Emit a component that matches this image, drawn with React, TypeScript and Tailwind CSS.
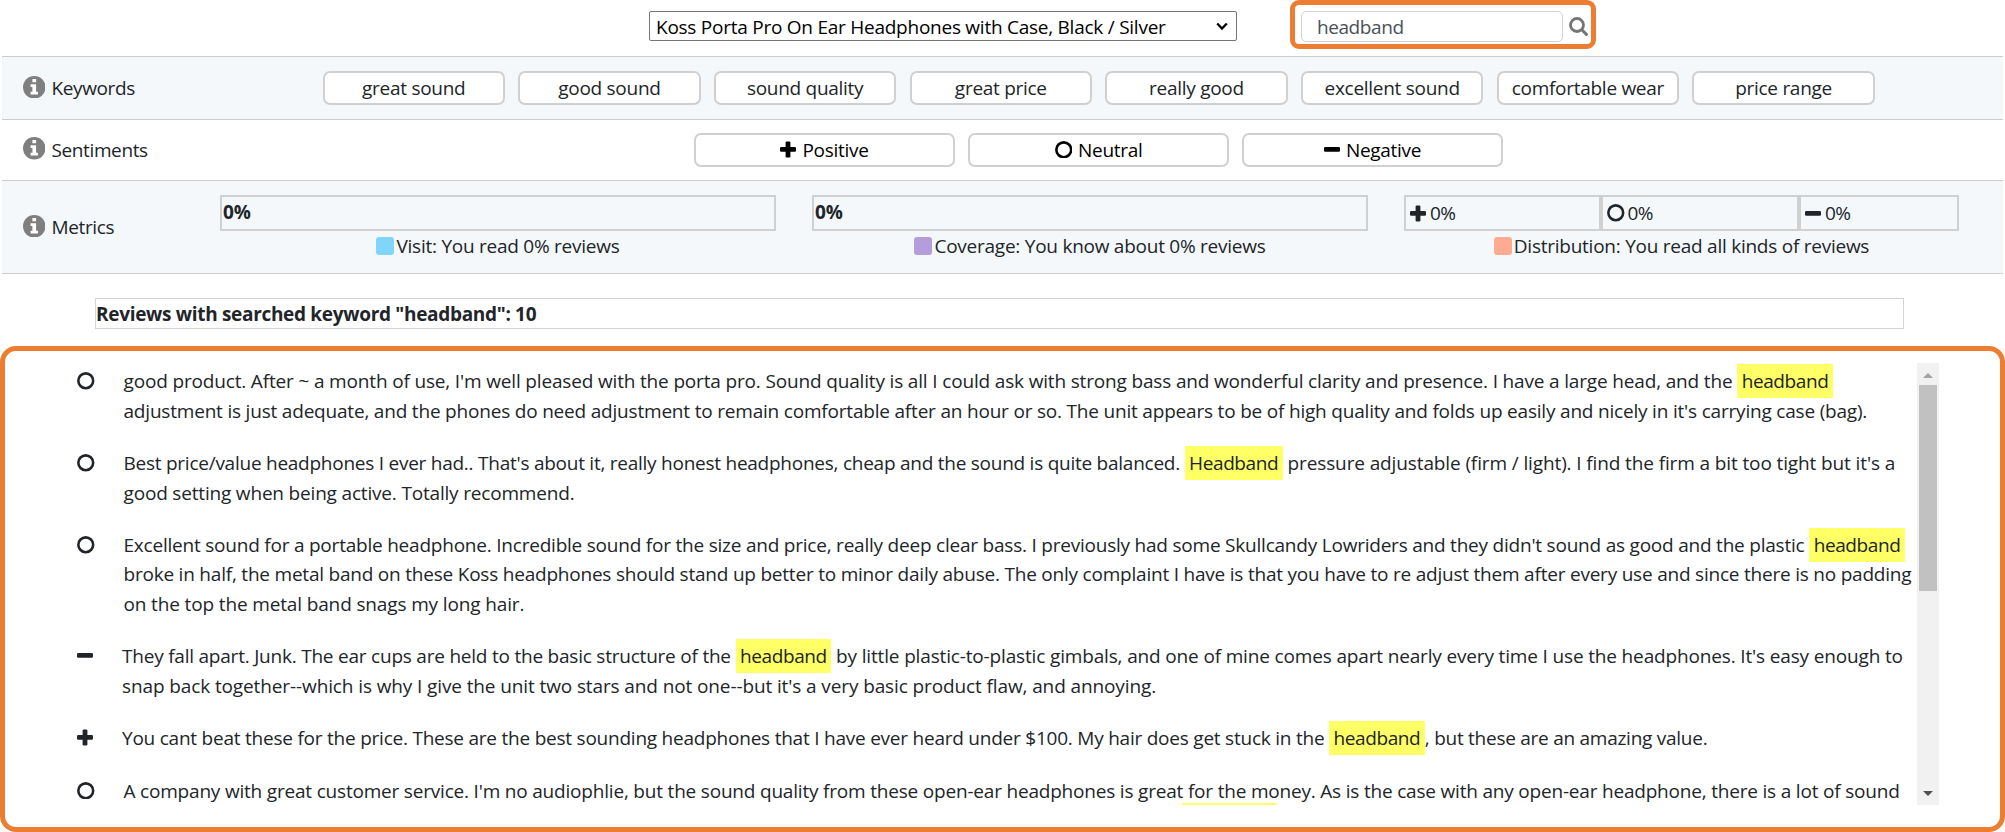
import type { ReactNode } from "react";

type Kind = "positive" | "neutral" | "negative";

function SentimentIcon({ kind }: { kind: Kind }) {
  if (kind === "neutral") {
    return (
      <svg className="block h-[17.5px] w-[17.5px] shrink-0" viewBox="0 0 17 17">
        <circle cx="8.5" cy="8.5" r="7.2" fill="none" stroke="currentColor" strokeWidth="2.5" />
      </svg>
    );
  }
  return (
    <svg className="block h-[17px] w-4 shrink-0" viewBox="0 0 16 17" fill="currentColor">
      <rect x="0" y="6" width="16" height="4.8" rx="1.2" />
      {kind === "positive" && <rect x="5.6" y="0.4" width="4.8" height="16" rx="1.2" />}
    </svg>
  );
}

function InfoIcon() {
  return (
    <svg className="-mt-[2px] block h-[22.5px] w-[22.5px] shrink-0" viewBox="0 0 22 22">
      <circle cx="11" cy="11" r="11" fill="#7f7f7f" />
      <path
        fill="#fff"
        d="M9.2 3h3.6v3.2H9.2zM7.4 8.1h5.4v7.3h1.8V18H7.4v-2.6h1.8v-4.7H7.4z"
      />
    </svg>
  );
}

function RowLabel({ children }: { children: ReactNode }) {
  return (
    <div className="flex w-[180px] shrink-0 items-center gap-[6.5px] pl-[20.5px]">
      <InfoIcon />
      <span className="leading-[30px] tracking-[-0.38px]">{children}</span>
    </div>
  );
}

const keywords = [
  "great sound",
  "good sound",
  "sound quality",
  "great price",
  "really good",
  "excellent sound",
  "comfortable wear",
  "price range",
];

const sentiments: { kind: Kind; label: string }[] = [
  { kind: "positive", label: "Positive" },
  { kind: "neutral", label: "Neutral" },
  { kind: "negative", label: "Negative" },
];

function Legend({ swatch, children }: { swatch: string; children: ReactNode }) {
  return (
    <div className="flex h-[30px] items-center justify-center gap-[2px]">
      <span className={`h-[18px] w-[18px] rounded-[3px] ${swatch}`} />
      <span className="leading-[30px] tracking-[-0.25px]">{children}</span>
    </div>
  );
}

function Mark({ children }: { children: ReactNode }) {
  return <mark className="bg-[#ffff66] px-[4.5px] py-1 tracking-[-0.4px] text-[#212529]">{children}</mark>;
}

function Review({ kind, children }: { kind: Kind; children: ReactNode }) {
  return (
    <div className="flex gap-[29px] whitespace-nowrap leading-[29.25px]">
      <div className="-mt-px flex h-[29.25px] items-center">
        <SentimentIcon kind={kind} />
      </div>
      <div>{children}</div>
    </div>
  );
}

export default function App() {
  return (
    <div className="flex h-[832px] w-[2005px] flex-col overflow-hidden bg-white font-['Open_Sans','Noto_Sans',sans-serif] text-[19px] text-[#212529]">
      <header className="flex h-14 shrink-0 items-start pl-[649px]">
        <div className="mt-[11px] flex h-[30px] w-[588px] items-center justify-between rounded-[2px] border-[1.5px] border-[#767676] pr-2 pl-[6px] text-black">
          <span className="pt-px leading-[28px] tracking-[-0.25px]">Koss Porta Pro On Ear Headphones with Case, Black / Silver</span>
          <svg className="h-[9px] w-[12px]" viewBox="0 0 12 9" fill="none">
            <path d="M1.2 1.5 6 6.6l4.8-5.1" stroke="#000" strokeWidth="2.3" />
          </svg>
        </div>
        <div className="ml-[53px] flex h-[49px] w-[306px] items-center rounded-[9px] border-[5px] border-[#ed7d31] pl-[6px]">
          <div className="mt-[4px] h-[31px] w-[262px] rounded-[5px] border border-[#ced4da] pl-[15px] leading-[30px] tracking-[-0.42px] text-[#495057]">
            headband
          </div>
          <svg className="mt-1 ml-[6px] h-[19px] w-[19px]" viewBox="0 0 19 19" fill="none">
            <circle cx="8" cy="8" r="6.5" stroke="#757575" strokeWidth="2.8" />
            <path d="m12.8 12.8 4.6 4.6" stroke="#757575" strokeWidth="3" strokeLinecap="round" />
          </svg>
        </div>
      </header>

      <section className="mx-[2px] flex h-[63px] shrink-0 items-center border-t border-[#ccc] bg-[#f4f8fb]">
        <RowLabel>Keywords</RowLabel>
        <div className="ml-[140.5px] flex gap-[13.2px]">
          {keywords.map((k) => (
            <button
              key={k}
              className="h-[34px] w-[182.5px] rounded-[7px] border-2 border-[#d0d0d0] bg-white text-center leading-[30px] tracking-[-0.28px] whitespace-nowrap"
            >
              {k}
            </button>
          ))}
        </div>
      </section>

      <section className="mx-[2px] flex h-[61px] shrink-0 items-center border-t border-[#ccc] pb-px">
        <RowLabel>Sentiments</RowLabel>
        <div className="ml-[512px] flex gap-[13px] text-black">
          {sentiments.map((s) => (
            <button
              key={s.label}
              className="flex h-[34px] w-[261px] items-center justify-center gap-[6px] rounded-[7px] border-2 border-[#d0d0d0] bg-white"
            >
              <SentimentIcon kind={s.kind} />
              <span className="leading-[30px] tracking-[-0.3px]">{s.label}</span>
            </button>
          ))}
        </div>
      </section>

      <section className="mx-[2px] flex h-[94px] shrink-0 items-center border-y border-[#ccc] bg-[#f4f8fb]">
        <RowLabel>Metrics</RowLabel>
        <div className="ml-[38px] flex w-[556px] flex-col self-start pt-[14px]">
          <div className="h-9 border-2 border-[#d0d0d0] pl-px leading-[30px] font-bold tracking-[-0.2px]">0%</div>
          <Legend swatch="bg-[#81d4fa]">Visit: You read 0% reviews</Legend>
        </div>
        <div className="ml-[36px] flex w-[556px] flex-col self-start pt-[14px]">
          <div className="h-9 border-2 border-[#d0d0d0] pl-px leading-[30px] font-bold tracking-[-0.2px]">0%</div>
          <Legend swatch="bg-[#b39ddb]">Coverage: You know about 0% reviews</Legend>
        </div>
        <div className="ml-[36px] flex w-[555px] flex-col self-start pt-[14px]">
          <div className="flex leading-[30px] tracking-[-0.6px]">
            <div className="flex h-9 w-[197px] items-center gap-1 border-2 border-[#d0d0d0] pl-[4px]">
              <SentimentIcon kind="positive" />
              <span>0%</span>
            </div>
            <div className="flex h-9 w-[198px] items-center gap-[3px] border-2 border-[#d0d0d0] pl-[4px]">
              <SentimentIcon kind="neutral" />
              <span>0%</span>
            </div>
            <div className="flex h-9 w-[160px] items-center gap-1 border-2 border-[#d0d0d0] pl-[4px]">
              <SentimentIcon kind="negative" />
              <span>0%</span>
            </div>
          </div>
          <Legend swatch="bg-[#ffab91]">Distribution: You read all kinds of reviews</Legend>
        </div>
      </section>

      <div className="mt-6 ml-[95px] h-[31px] w-[1809px] shrink-0 border border-[#d3d3d3] leading-[30px] font-bold tracking-[-0.31px]">
        {'Reviews with searched keyword "headband": 10'}
      </div>

      <main className="mt-[17px] flex h-[486px] shrink-0 items-start rounded-[16px] border-[5px] border-[#ed7d31] pt-3 pl-[72px]">
        <div className="flex h-[442px] w-[1840px] flex-col gap-[23.4px] overflow-hidden pt-[4.4px]">
          <Review kind="neutral">
            <div>
              <span className="tracking-[-0.162px]">
                good product. After ~ a month of use, I'm well pleased with the porta pro. Sound quality is all I could ask with strong bass and wonderful clarity and presence. I have a large head, and the{" "}
              </span>
              <Mark>headband</Mark>
            </div>
            <div className="tracking-[-0.196px]">
              adjustment is just adequate, and the phones do need adjustment to remain comfortable after an hour or so. The unit appears to be of high quality and folds up easily and nicely in it's carrying case (bag).
            </div>
          </Review>
          <Review kind="neutral">
            <div>
              <span className="tracking-[-0.25px]">
                Best price/value headphones I ever had.. That's about it, really honest headphones, cheap and the sound is quite balanced.{" "}
              </span>
              <Mark>Headband</Mark>
              <span className="tracking-[-0.12px]"> pressure adjustable (firm / light). I find the firm a bit too tight but it's a</span>
            </div>
            <div className="tracking-[-0.18px]">good setting when being active. Totally recommend.</div>
          </Review>
          <Review kind="neutral">
            <div>
              <span className="tracking-[-0.218px]">
                Excellent sound for a portable headphone. Incredible sound for the size and price, really deep clear bass. I previously had some Skullcandy Lowriders and they didn't sound as good and the plastic{" "}
              </span>
              <Mark>headband</Mark>
            </div>
            <div className="tracking-[-0.214px]">
              broke in half, the metal band on these Koss headphones should stand up better to minor daily abuse. The only complaint I have is that you have to re adjust them after every use and since there is no padding
            </div>
            <div className="tracking-[-0.14px]">on the top the metal band snags my long hair.</div>
          </Review>
          <Review kind="negative">
            <div>
              <span className="tracking-[-0.22px]">They fall apart. Junk. The ear cups are held to the basic structure of the </span>
              <Mark>headband</Mark>
              <span className="tracking-[-0.155px]">
                {" "}by little plastic-to-plastic gimbals, and one of mine comes apart nearly every time I use the headphones. It's easy enough to
              </span>
            </div>
            <div className="tracking-[-0.114px]">
              snap back together--which is why I give the unit two stars and not one--but it's a very basic product flaw, and annoying.
            </div>
          </Review>
          <Review kind="positive">
            <div>
              <span className="tracking-[-0.228px]">
                You cant beat these for the price. These are the best sounding headphones that I have ever heard under $100. My hair does get stuck in the{" "}
              </span>
              <Mark>headband</Mark>
              <span className="tracking-[-0.26px]">, but these are an amazing value.</span>
            </div>
          </Review>
          <Review kind="neutral">
            <div className="tracking-[-0.195px]">
              A company with great customer service. I'm no audiophlie, but the sound quality from these open-ear headphones is great for the money. As is the case with any open-ear headphone, there is a lot of sound
            </div>
            <div className="-mt-[3px] ml-[1058px] h-[34px] w-[95px] bg-[#ffff66]" />
          </Review>
        </div>
        <div className="flex h-[442px] w-[22px] shrink-0 flex-col items-center bg-[#f1f1f1]">
          <div className="flex h-[22px] shrink-0 items-center pt-[2px]">
            <svg className="h-[5px] w-[10px]" viewBox="0 0 10 5">
              <path d="M0 5 5 0l5 5z" fill="#a3a3a3" />
            </svg>
          </div>
          <div className="h-[206px] w-[18px] shrink-0 bg-[#c1c1c1]" />
          <div className="mt-auto flex h-[22px] shrink-0 items-center pb-px">
            <svg className="h-[5px] w-[10px]" viewBox="0 0 10 5">
              <path d="m0 0 5 5 5-5z" fill="#505050" />
            </svg>
          </div>
        </div>
      </main>
    </div>
  );
}
